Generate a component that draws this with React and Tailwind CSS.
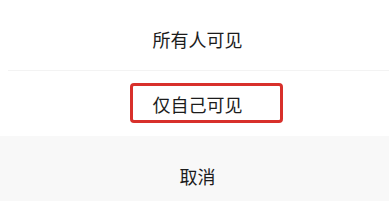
export default function App() {
  const font = { fontFamily: '"Noto Sans CJK SC", "Noto Sans", sans-serif' };
  return (
    <div className="relative w-[389px] h-[201px] bg-white flex flex-col overflow-hidden text-[#1c1c1c]" style={font}>
      <div className="h-[70px] flex items-end justify-center pb-[17px] pl-[6px]">
        <span className="text-[18px] leading-[28px]">所有人可见</span>
      </div>
      <div className="h-px bg-[#f3f3f3] ml-[8px]" />
      <div className="h-[65px] flex items-center justify-center pl-[6px]">
        <span className="text-[18px] leading-[28px]">仅自己可见</span>
      </div>
      <div className="flex-1 bg-[#f8f8f8] flex items-start justify-center pt-[26px] pl-[6px]">
        <span className="text-[18px] leading-[28px]">取消</span>
      </div>
      <div className="absolute left-[130px] top-[83px] w-[153px] h-[40px] border-[3px] border-[#d8302b] rounded-[4px] pointer-events-none" />
    </div>
  );
}
